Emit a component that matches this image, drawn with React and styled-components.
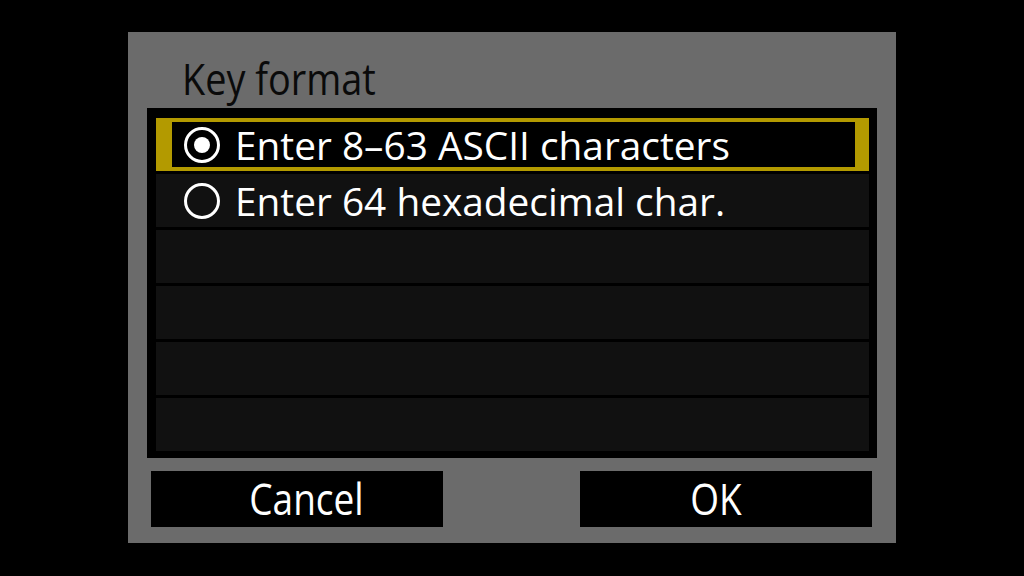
import React from "react";
import styled, { createGlobalStyle } from "styled-components";

const Global = createGlobalStyle`
  html, body { margin: 0; padding: 0; background: #000; }
  * { box-sizing: border-box; }
`;

const Screen = styled.div`
  width: 1024px;
  height: 576px;
  background: #000;
  display: flex;
  justify-content: center;
  align-items: flex-start;
  padding-top: 32px;
  font-family: "Open Sans", "DejaVu Sans", sans-serif;
`;

const Dialog = styled.div`
  width: 768px;
  height: 511px;
  background: #6b6b6b;
  display: flex;
  flex-direction: column;
  padding: 0 19px;
`;

const Title = styled.div`
  height: 76px;
  padding-top: 25px;
  padding-left: 35px;
  line-height: 43px;
  font-size: 43px;
  color: #0a0a0a;
  white-space: nowrap;
`;

const Squeeze = styled.span`
  display: inline-block;
  transform: scaleX(${(p) => p.$s});
  transform-origin: ${(p) => p.$origin || "left center"};
  white-space: nowrap;
`;

const Panel = styled.div`
  height: 350px;
  background: #000;
  padding: 10px 8px 7px 9px;
  display: flex;
  flex-direction: column;
  gap: 3px;
`;

const Row = styled.div`
  height: 53px;
  flex: none;
  background: ${(p) => (p.$selected ? "#000" : "#111")};
  border-style: solid;
  border-width: 4px 14px 4px 16px;
  border-color: ${(p) => (p.$selected ? "#b39a00" : "transparent")};
  display: flex;
  align-items: center;
  padding-left: 12px;
  gap: 15px;
`;

const Radio = styled.div`
  width: 36px;
  height: 36px;
  flex: none;
  border-radius: 50%;
  border: 3px solid #fff;
  display: flex;
  align-items: center;
  justify-content: center;
  &::after {
    content: "";
    display: ${(p) => (p.$checked ? "block" : "none")};
    width: 16px;
    height: 16px;
    border-radius: 50%;
    background: #fff;
  }
`;

const Label = styled.div`
  color: #fff;
  font-size: 39px;
  line-height: 45px;
  white-space: nowrap;
`;

const Buttons = styled.div`
  margin-top: 13px;
  display: flex;
  justify-content: space-between;
  padding: 0 5px 0 4px;
`;

const Button = styled.div`
  width: 292px;
  height: 56px;
  background: #000;
  color: #fff;
  font-size: 43px;
  line-height: 56px;
  display: flex;
  justify-content: center;
  padding-left: ${(p) => (p.$shift > 0 ? p.$shift * 2 : 0)}px;
  padding-right: ${(p) => (p.$shift < 0 ? -p.$shift * 2 : 0)}px;
`;

const options = [
  { label: "Enter 8–63 ASCII characters", checked: true },
  { label: "Enter 64 hexadecimal char.", checked: false },
  null,
  null,
  null,
  null,
];

export default function App() {
  return (
    <>
      <Global />
      <Screen>
        <Dialog>
          <Title>
            <Squeeze $s={0.88}>Key format</Squeeze>
          </Title>
          <Panel>
            {options.map((o, i) => (
              <Row key={i} $selected={o && o.checked}>
                {o && (
                  <>
                    <Radio $checked={o.checked} />
                    <Label>
                      <Squeeze $s={0.995}>{o.label}</Squeeze>
                    </Label>
                  </>
                )}
              </Row>
            ))}
          </Panel>
          <Buttons>
            <Button $shift={9.5}>
              <Squeeze $s={0.86} $origin="center">Cancel</Squeeze>
            </Button>
            <Button $shift={-10.5}>
              <Squeeze $s={0.86} $origin="center">OK</Squeeze>
            </Button>
          </Buttons>
        </Dialog>
      </Screen>
    </>
  );
}
